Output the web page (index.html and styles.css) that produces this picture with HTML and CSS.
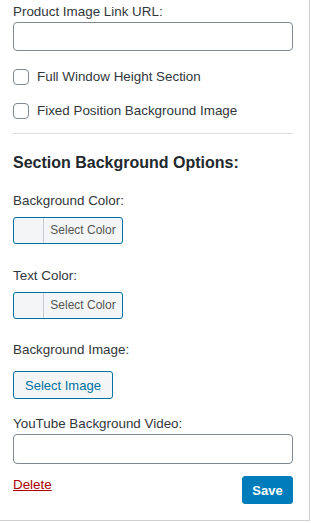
FILE: index.html
```html
<!DOCTYPE html>
<html lang="en">
<head>
  <meta charset="UTF-8" />
  <meta name="viewport" content="width=device-width, initial-scale=1">
  <title>Section Widget</title>
  <link rel="stylesheet" href="styles.css">
</head>
<body>
  <div class="widget-inside">
    <form class="widget-form">
      <label class="field-label" for="productLink">Product Image Link URL:</label>
      <input type="text" id="productLink" class="text-input">

      <label class="check-row first">
        <input type="checkbox" class="check">
        <span>Full Window Height Section</span>
      </label>
      <label class="check-row">
        <input type="checkbox" class="check">
        <span>Fixed Position Background Image</span>
      </label>

      <hr class="divider">

      <h3 class="section-title">Section Background Options:</h3>

      <div class="field color-field first">
        <span class="field-label">Background Color:</span>
        <button type="button" class="color-result">
          <span class="swatch"></span>
          <span class="color-text">Select Color</span>
        </button>
      </div>

      <div class="field color-field">
        <span class="field-label">Text Color:</span>
        <button type="button" class="color-result">
          <span class="swatch"></span>
          <span class="color-text">Select Color</span>
        </button>
      </div>

      <div class="field image-field">
        <span class="field-label">Background Image:</span>
        <button type="button" class="button">Select Image</button>
      </div>

      <div class="field video-field">
        <label class="field-label" for="ytVideo">YouTube Background Video:</label>
        <input type="text" id="ytVideo" class="text-input tall">
      </div>

      <div class="widget-actions">
        <a href="#" class="delete-link">Delete</a>
        <button type="submit" class="button-primary">Save</button>
      </div>
    </form>
  </div>
</body>
</html>
```

FILE: styles.css
```css
*, *::before, *::after { box-sizing: border-box; }
body {
  margin: 0;
  background: #fff;
  font-family: "Liberation Sans", Arial, sans-serif;
  font-size: 13.4px;
  color: #32373c;
}

/* widget box */
.widget-inside {
  width: 310px;
  border-right: 1px solid #ccd0d4;
  border-bottom: 1px solid #ccd0d4;
  padding: 3px 16px 16px 13px;
}
.widget-form { display: flex; flex-direction: column; }

.field-label {
  display: block;
  line-height: 18px;
}
.field { display: flex; flex-direction: column; align-items: flex-start; }

/* text inputs */
.text-input {
  display: block;
  width: 100%;
  height: 29px;
  margin: 1px 0 0;
  padding: 0 8px;
  border: 1px solid #7e8993;
  border-radius: 4px;
  background: #fff;
  font: inherit;
}
.text-input.tall { height: 30px; }

/* checkboxes */
.check-row {
  display: flex; align-items: center; gap: 8px;
  margin-top: 18px;
  line-height: 16px;
}
.check {
  appearance: none;
  margin: 0;
  width: 16px; height: 16px;
  border: 1px solid #7e8993;
  border-radius: 4px;
  background: #fff;
}

.divider {
  width: 100%;
  margin: 14px 0 0;
  border: none;
  border-top: 1px solid #ddd;
}
.section-title {
  margin: 19px 0 0;
  font-size: 16px;
  line-height: 20px;
  font-weight: 700;
  color: #23282d;
}

/* color picker buttons */
.color-field { margin-top: 19px; }
.color-field + .color-field { margin-top: 23px; }
.color-result {
  display: flex;
  margin-top: 7px;
  padding: 0;
  width: 110px; height: 27px;
  border: 1px solid #0071a1;
  border-radius: 3px;
  background: #f3f5f6;
  overflow: hidden;
  cursor: pointer;
}
.swatch {
  width: 30px; height: 100%;
  border-right: 1px solid #c8cbcf;
}
.color-text {
  flex: 1;
  font-family: "Liberation Sans", Arial, sans-serif;
  font-size: 12px;
  line-height: 25px;
  color: #555;
  text-align: center;
}

/* media button */
.image-field { margin-top: 22px; }
.button {
  margin-top: 12px;
  height: 28px;
  padding: 0 11px;
  border: 1px solid #0071a1;
  border-radius: 3px;
  background: #f3f5f6;
  color: #0071a1;
  font-family: inherit;
  font-size: 13px;
  cursor: pointer;
}

.video-field { margin-top: 16px; }

/* footer */
.widget-actions {
  display: flex;
  justify-content: space-between;
  align-items: flex-start;
  margin-top: 12px;
}
.delete-link {
  line-height: 18px;
  color: #a00;
  text-decoration: underline;
}
.button-primary {
  width: 51px; height: 28px;
  padding: 0;
  border: 1px solid #007cba;
  border-radius: 3px;
  background: #007cba;
  color: #fff;
  font-family: inherit;
  font-size: 13px;
  font-weight: 700;
  cursor: pointer;
}
```
